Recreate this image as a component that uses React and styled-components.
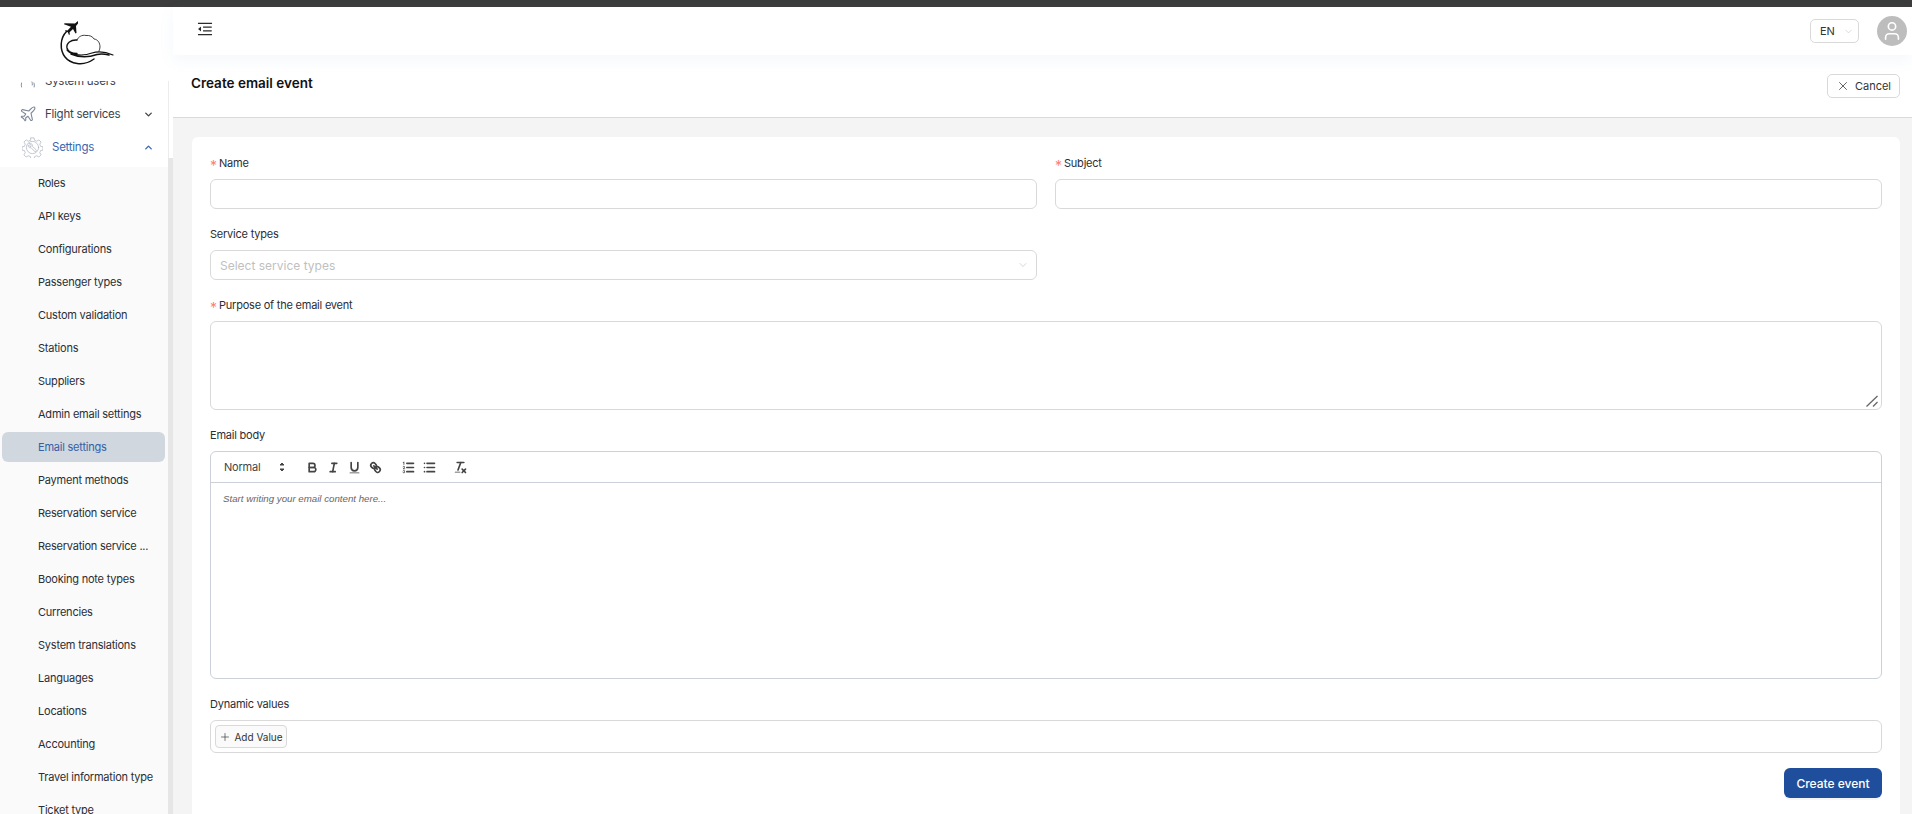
import React from 'react';
import styled, { createGlobalStyle } from 'styled-components';
import { ChevronDown, ChevronUp, Plane, X, Plus, User } from 'lucide-react';
import { AiOutlineMenuFold } from 'react-icons/ai';

const GlobalStyle = createGlobalStyle`
  html, body { margin: 0; padding: 0; height: 100%; overflow: hidden; }
  body { font-family: Inter, "Noto Sans", sans-serif; background: #f4f4f4; color: #22262c; }
  * { box-sizing: border-box; }
`;

const TopStrip = styled.div`
  height: 7px;
  background: #3c3c3c;
`;

const Shell = styled.div`
  display: flex;
  height: 807px;
`;

const Sidebar = styled.aside`
  width: 173px;
  flex: none;
  background: #fff;
  display: flex;
  flex-direction: column;
  overflow: hidden;
`;

const LogoBox = styled.div`
  height: 74px;
  flex: none;
  display: flex;
  justify-content: center;
  padding-top: 12px;
  background: #fff;
`;

const MenuScroll = styled.div`
  flex: 1;
  display: flex;
  min-height: 0;
  overflow: hidden;
`;

const MenuList = styled.nav`
  flex: 1;
  min-width: 0;
  margin-top: -16.5px;
`;

const Track = styled.div`
  width: 5px;
  flex: none;
  background: #fff;
  border-left: 1px solid #ececec;
  display: flex;
  flex-direction: column;
  padding-top: 77px;
`;

const Thumb = styled.div`
  flex: 1;
  margin-left: -1px;
  background: #e6e6e6;
`;

const MenuRow = styled.div`
  height: 33px;
  display: flex;
  align-items: center;
  font-size: 11.5px;
  letter-spacing: -0.25px;
  padding-left: ${p => p.$pad}px;
  padding-right: 14px;
  color: ${p => (p.$open ? '#3a66b0' : '#3b4250')};
  svg.lead { flex: none; margin-right: ${p => p.$gap}px; }
  svg.caret { margin-left: auto; flex: none; }
`;

const MenuText = styled.span`
  flex: 1;
  white-space: nowrap;
`;

const SubMenu = styled.div`
  margin-top: 3px;
  background: #fafafa;
  padding-bottom: 40px;
  display: flex;
  flex-direction: column;
`;

const SubItem = styled.div`
  height: 30px;
  flex: none;
  margin: 1.5px 3px 1.5px 2px;
  padding-left: 36px;
  display: flex;
  align-items: center;
  font-size: 11px;
  letter-spacing: -0.22px;
  white-space: nowrap;
  border-radius: 6px;
  color: ${p => (p.$active ? '#3460a8' : '#2a2e35')};
  background: ${p => (p.$active ? '#d0d7de' : 'transparent')};
`;

const Main = styled.div`
  flex: 1;
  min-width: 0;
  display: flex;
  flex-direction: column;
`;

const TopBar = styled.header`
  height: 48px;
  flex: none;
  background: #fff;
  display: flex;
  align-items: center;
  padding: 0 5px 0 23px;
  position: relative;
  z-index: 2;
  box-shadow: 0 5px 14px rgba(120, 150, 200, 0.08);
`;

const MenuToggle = styled.div`
  display: flex;
  margin-bottom: 5px;
  color: #2b2b2b;
  font-size: 18px;
`;

const LangSelect = styled.div`
  margin-left: auto;
  width: 49px;
  height: 24px;
  border: 1px solid #d9d9d9;
  border-radius: 5px;
  display: flex;
  align-items: center;
  padding-left: 9px;
  gap: 8px;
  font-size: 11px;
  color: #333;
  svg { color: #bdbdbd; }
`;

const Avatar = styled.div`
  width: 30px;
  height: 30px;
  border-radius: 50%;
  background: #bdbdbd;
  color: #fff;
  margin-left: 18px;
  display: flex;
  align-items: center;
  justify-content: center;
`;

const PageHead = styled.div`
  height: 63px;
  flex: none;
  background: #fff;
  border-bottom: 1px solid #d9d9d9;
  display: flex;
  justify-content: space-between;
  padding: 19px 12px 0 18px;
`;

const Title = styled.h1`
  margin: 0;
  font-size: 13.5px;
  font-weight: 600;
  line-height: 18px;
  color: #111;
`;

const CancelButton = styled.button`
  height: 24px;
  width: 73px;
  background: #fff;
  border: 1px solid #d9d9d9;
  border-radius: 5px;
  font: 11px Inter, sans-serif;
  color: #333;
  display: flex;
  align-items: center;
  justify-content: center;
  gap: 5px;
  padding: 0;
`;

const Content = styled.div`
  flex: 1;
  min-height: 0;
  padding: 19px 12px 0 19px;
  overflow: hidden;
`;

const Card = styled.form`
  background: #fff;
  border-radius: 6px 6px 0 0;
  padding: 16px 18px 0;
  height: 100%;
`;

const TwoCols = styled.div`
  display: grid;
  grid-template-columns: 1fr 1fr;
  column-gap: 18px;
`;

const Field = styled.div`
  margin-bottom: 15px;
`;

const Label = styled.label`
  display: block;
  height: 20px;
  line-height: 20px;
  margin-bottom: 6px;
  font-size: 11px;
  letter-spacing: -0.22px;
  color: #2a2e35;
`;

const Star = styled.span`
  display: inline-block;
  width: 9px;
  color: #ff7d73;
  font-size: 14px;
  line-height: 12px;
  vertical-align: -4px;
`;

const TextInput = styled.input`
  display: block;
  width: 100%;
  height: 30px;
  border: 1px solid #d9d9d9;
  border-radius: 6px;
  background: #fff;
  outline: none;
`;

const SelectBox = styled.div`
  height: 30px;
  border: 1px solid #d9d9d9;
  border-radius: 6px;
  display: flex;
  align-items: center;
  justify-content: space-between;
  padding: 0 7px 0 9px;
  font-size: 12px;
  color: #bfbfbf;
`;

const AreaWrap = styled.div`
  position: relative;
  height: 89px;
`;

const TextArea = styled.textarea`
  display: block;
  width: 100%;
  height: 100%;
  border: 1px solid #d9d9d9;
  border-radius: 6px;
  background: #fff;
  outline: none;
  resize: none;
`;

const Grip = styled.svg`
  position: absolute;
  right: 3px;
  bottom: 2px;
`;

const Editor = styled.div`
  height: 228px;
  border: 1px solid #ccd1d9;
  border-radius: 6px;
  overflow: hidden;
`;

const Toolbar = styled.div`
  height: 31px;
  border-bottom: 1px solid #ccd1d9;
  display: flex;
  align-items: center;
  padding-left: 13px;
`;

const Picker = styled.div`
  width: 78px;
  display: flex;
  align-items: center;
  justify-content: space-between;
  padding-right: 11px;
  font-size: 11px;
  letter-spacing: -0.2px;
  color: #444;
`;

const ToolGroup = styled.div`
  display: flex;
  margin-right: ${p => p.$after}px;
`;

const ToolButton = styled.div`
  width: 21px;
  height: 24px;
  display: flex;
  align-items: center;
  justify-content: center;
  svg {
    width: 15px;
    height: 15px;
    fill: none;
    stroke: #444;
    stroke-width: 2;
    stroke-linecap: round;
    stroke-linejoin: round;
  }
  svg .thin { stroke-width: 1; }
  svg .solid { fill: #444; stroke: none; }
`;

const EditorBody = styled.div`
  padding: 9px 12px;
  font-size: 9.7px;
  line-height: 14px;
  font-style: italic;
  font-family: "Liberation Sans", Arial, sans-serif;
  color: #666;
`;

const ValuesBox = styled.div`
  height: 33px;
  border: 1px solid #d9d9d9;
  border-radius: 6px;
  padding: 4px;
  display: flex;
  align-items: flex-start;
`;

const AddButton = styled.button`
  height: 23px;
  width: 72px;
  border: 1px solid #d9d9d9;
  border-radius: 4px;
  background: #fafafa;
  display: flex;
  align-items: center;
  justify-content: center;
  gap: 3px;
  padding: 0;
  font: 10px Inter, sans-serif;
  color: #333;
`;

const FormFoot = styled.div`
  display: flex;
  justify-content: flex-end;
  margin-top: 2px;
`;

const SubmitButton = styled.button`
  width: 98px;
  height: 30px;
  border: none;
  border-radius: 6px;
  background: #1f4f9c;
  color: #fff;
  font: 500 12px Inter, sans-serif;
  padding: 0;
  box-shadow: 0 2px 0 rgba(0, 0, 0, 0.04);
`;

const subItems = [
  'Roles', 'API keys', 'Configurations', 'Passenger types', 'Custom validation', 'Stations',
  'Suppliers', 'Admin email settings', 'Email settings', 'Payment methods', 'Reservation service',
  'Reservation service ...', 'Booking note types', 'Currencies', 'System translations', 'Languages',
  'Locations', 'Accounting', 'Travel information type', 'Ticket type',
];

function Logo() {
  return (
    <svg width="58" height="48" viewBox="58 19 58 48" fill="none" stroke="#111" strokeLinecap="round">
      <path d="M78 21 L75 23.5 L64.5 23.2 L64 24.2 L71 26.8 L67.5 30.5 L65.5 30.2 L65 31 L67.8 32.2 L69 35 L69.8 34.5 L69.6 32.3 L73 29 L75.5 33.5 L76.5 33 L76 26 L78 23.5 Z" fill="#111" stroke="none" />
      <path d="M66.5 31.5 C60 38 59.5 50 65 57 C70 63.5 83 67 94 59" strokeWidth="1.5" />
      <path d="M77 40 C71 39.5 66 43 67 48 C68 52 72 53.5 77 53.5" strokeWidth="1.4" />
      <path d="M77 40 C78 37 82 34.5 86 35.5 C89 35 93 36.5 94 39 C98 39.5 100 43 100 47 C100 48.5 99.5 50 99 51" strokeWidth="0.8" />
      <path d="M67 50 C72 56 84 56 92 53 C98 51 106 52 113 55" strokeWidth="1.2" />
      <path d="M71 54 C80 58 90 57 97 54.5 C101 53.5 105 54 109 55" strokeWidth="1.5" />
    </svg>
  );
}

function UsersIcon() {
  return (
    <svg className="lead" width="16" height="16" viewBox="0 0 16 16" fill="none" stroke="#8a93a3" strokeWidth="1" strokeLinecap="round">
      <path d="M1.5 10c-.3 1.500-.3 3 0 4" />
      <path d="M14 10c.4 1.200.5 2.800.2 4" />
      <path d="M12 9c.4 1 .5 2 .3 3" />
    </svg>
  );
}

function GearIcon() {
  return (
    <svg className="lead" width="21" height="21" viewBox="0 0 24 24" fill="none" stroke="#aab1bd" strokeWidth="0.8" strokeLinejoin="round" strokeLinecap="round">
      <path d="M10.200 1h3.600l.6 2.800 2.500 1 2.400-1.500 2.500 2.500-1.500 2.400 1 2.500 2.700.6v3.600l-2.700.6-1 2.500 1.500 2.400-2.500 2.500-2.400-1.500-2.500 1-.6 2.700h-3.600l-.6-2.700-2.500-1-2.400 1.500-2.500-2.500 1.500-2.400-1-2.500-2.700-.6v-3.600l2.700-.6 1-2.500-1.500-2.400 2.500-2.500 2.400 1.500 2.500-1z" />
      <circle cx="12" cy="12" r="7" />
      <path d="M8.600 7.800l2 2-.3 1-1 .3-2-2c-.4 1.400.1 2.600 1.300 3 .6.2 1.200.2 1.700 0l3.900 4.200c.5.500 1.300.5 1.800 0s.5-1.300 0-1.800l-4.200-3.900c.2-.5.2-1.100 0-1.700-.4-1.200-1.800-1.700-3.200-1.100z" />
    </svg>
  );
}

function Quill({ children }) {
  return (
    <ToolButton>
      <svg viewBox="0 0 18 18">{children}</svg>
    </ToolButton>
  );
}

export default function App() {
  return (
    <>
      <GlobalStyle />
      <TopStrip />
      <Shell>
        <Sidebar>
          <LogoBox><Logo /></LogoBox>
          <MenuScroll>
            <MenuList>
              <MenuRow $pad={20} $gap={9}>
                <UsersIcon />
                <MenuText>System users</MenuText>
              </MenuRow>
              <MenuRow $pad={19} $gap={8}>
                <Plane className="lead" size={18} color="#7d8798" strokeWidth={1.5} />
                <MenuText>Flight services</MenuText>
                <ChevronDown className="caret" size={11} color="#444" strokeWidth={3} />
              </MenuRow>
              <MenuRow $pad={22} $gap={9} $open>
                <GearIcon />
                <MenuText>Settings</MenuText>
                <ChevronUp className="caret" size={11} color="#3a66b0" strokeWidth={3} />
              </MenuRow>
              <SubMenu>
                {subItems.map(name => (
                  <SubItem key={name} $active={name === 'Email settings'}>{name}</SubItem>
                ))}
              </SubMenu>
            </MenuList>
            <Track><Thumb /></Track>
          </MenuScroll>
        </Sidebar>

        <Main>
          <TopBar>
            <MenuToggle><AiOutlineMenuFold /></MenuToggle>
            <LangSelect>EN <ChevronDown size={11} strokeWidth={1.2} /></LangSelect>
            <Avatar><User size={22} strokeWidth={1.8} /></Avatar>
          </TopBar>
          <PageHead>
            <Title>Create email event</Title>
            <CancelButton type="button"><X size={14} strokeWidth={1.3} /> Cancel</CancelButton>
          </PageHead>
          <Content>
            <Card>
              <TwoCols>
                <Field>
                  <Label><Star>*</Star>Name</Label>
                  <TextInput />
                </Field>
                <Field>
                  <Label><Star>*</Star>Subject</Label>
                  <TextInput />
                </Field>
              </TwoCols>
              <TwoCols>
                <Field>
                  <Label>Service types</Label>
                  <SelectBox>
                    Select service types
                    <ChevronDown size={12} strokeWidth={1.3} />
                  </SelectBox>
                </Field>
              </TwoCols>
              <Field>
                <Label><Star>*</Star>Purpose of the email event</Label>
                <AreaWrap>
                  <TextArea />
                  <Grip width="14" height="14" viewBox="0 0 14 14" stroke="#666" strokeWidth="1.3">
                    <line x1="1.5" y1="12.500" x2="12.500" y2="2" />
                    <line x1="8" y1="12.500" x2="12.500" y2="8" />
                  </Grip>
                </AreaWrap>
              </Field>
              <Field>
                <Label>Email body</Label>
                <Editor>
                  <Toolbar>
                    <Picker>
                      Normal
                      <svg width="18" height="18" viewBox="0 0 18 18" fill="#444" stroke="#444">
                        <polygon points="7 11 9 13 11 11 7 11" />
                        <polygon points="7 7 9 5 11 7 7 7" />
                      </svg>
                    </Picker>
                    <ToolGroup $after={12}>
                      <Quill>
                        <path d="M5,4H9.5A2.5,2.5,0,0,1,12,6.5v0A2.5,2.5,0,0,1,9.5,9H5A0,0,0,0,1,5,9V4A0,0,0,0,1,5,4Z" />
                        <path d="M5,9h5.5A2.5,2.5,0,0,1,13,11.5v0A2.5,2.5,0,0,1,10.5,14H5a0,0,0,0,1,0,0V9A0,0,0,0,1,5,9Z" />
                      </Quill>
                      <Quill>
                        <line x1="7" x2="13" y1="4" y2="4" />
                        <line x1="5" x2="11" y1="14" y2="14" />
                        <line x1="8" x2="10" y1="14" y2="4" />
                      </Quill>
                      <Quill>
                        <path d="M5,3V9a4.012,4.012,0,0,0,4,4H9a4.012,4.012,0,0,0,4-4V3" />
                        <rect className="solid" height="1" rx=".5" ry=".5" width="12" x="3" y="15" />
                      </Quill>
                      <Quill>
                        <line x1="7" x2="11" y1="7" y2="11" />
                        <path d="M8.9,4.577a3.476,3.476,0,0,1,.36,4.679A3.476,3.476,0,0,1,4.577,8.9C3.185,7.5,2.035,6.4,4.217,4.217S7.5,3.185,8.9,4.577Z" />
                        <path d="M13.423,9.1a3.476,3.476,0,0,0-4.679-.36,3.476,3.476,0,0,0,.36,4.679c1.392,1.392,2.5,2.542,4.679.36S14.815,10.5,13.423,9.1Z" />
                      </Quill>
                    </ToolGroup>
                    <ToolGroup $after={10}>
                      <Quill>
                        <line x1="7" x2="15" y1="4" y2="4" />
                        <line x1="7" x2="15" y1="9" y2="9" />
                        <line x1="7" x2="15" y1="14" y2="14" />
                        <path className="solid" d="M3.5,6A0.5,0.5,0,0,1,3,5.5V3.085l-0.276.138A0.5,0.5,0,0,1,2.053,3c-0.124-.247-0.023-0.324.224-0.447l1-.5A0.5,0.5,0,0,1,4,2.5v3A0.5,0.5,0,0,1,3.5,6Z" />
                        <path className="thin" d="M4.5,10.5h-2c0-.234,1.85-1.076,1.85-2.234A0.959,0.959,0,0,0,2.5,8.156" />
                        <path className="thin" d="M2.5,14.846a0.959,0.959,0,0,0,1.85-.109A0.7,0.7,0,0,0,3.75,14a0.688,0.688,0,0,0,.6-0.736,0.959,0.959,0,0,0-1.85-.109" />
                      </Quill>
                      <Quill>
                        <line x1="6" x2="15" y1="4" y2="4" />
                        <line x1="6" x2="15" y1="9" y2="9" />
                        <line x1="6" x2="15" y1="14" y2="14" />
                        <line x1="3" x2="3" y1="4" y2="4" />
                        <line x1="3" x2="3" y1="9" y2="9" />
                        <line x1="3" x2="3" y1="14" y2="14" />
                      </Quill>
                    </ToolGroup>
                    <ToolGroup>
                      <Quill>
                        <line x1="5" x2="13" y1="3" y2="3" />
                        <line x1="6" x2="9.35" y1="12" y2="3" />
                        <line x1="11" x2="15" y1="11" y2="15" />
                        <line x1="15" x2="11" y1="11" y2="15" />
                        <rect className="solid" height="1" rx=".5" ry=".5" width="7" x="2" y="14" />
                      </Quill>
                    </ToolGroup>
                  </Toolbar>
                  <EditorBody>Start writing your email content here...</EditorBody>
                </Editor>
              </Field>
              <Field>
                <Label>Dynamic values</Label>
                <ValuesBox>
                  <AddButton type="button"><Plus size={12} strokeWidth={1.3} /> Add Value</AddButton>
                </ValuesBox>
              </Field>
              <FormFoot>
                <SubmitButton type="button">Create event</SubmitButton>
              </FormFoot>
            </Card>
          </Content>
        </Main>
      </Shell>
    </>
  );
}
